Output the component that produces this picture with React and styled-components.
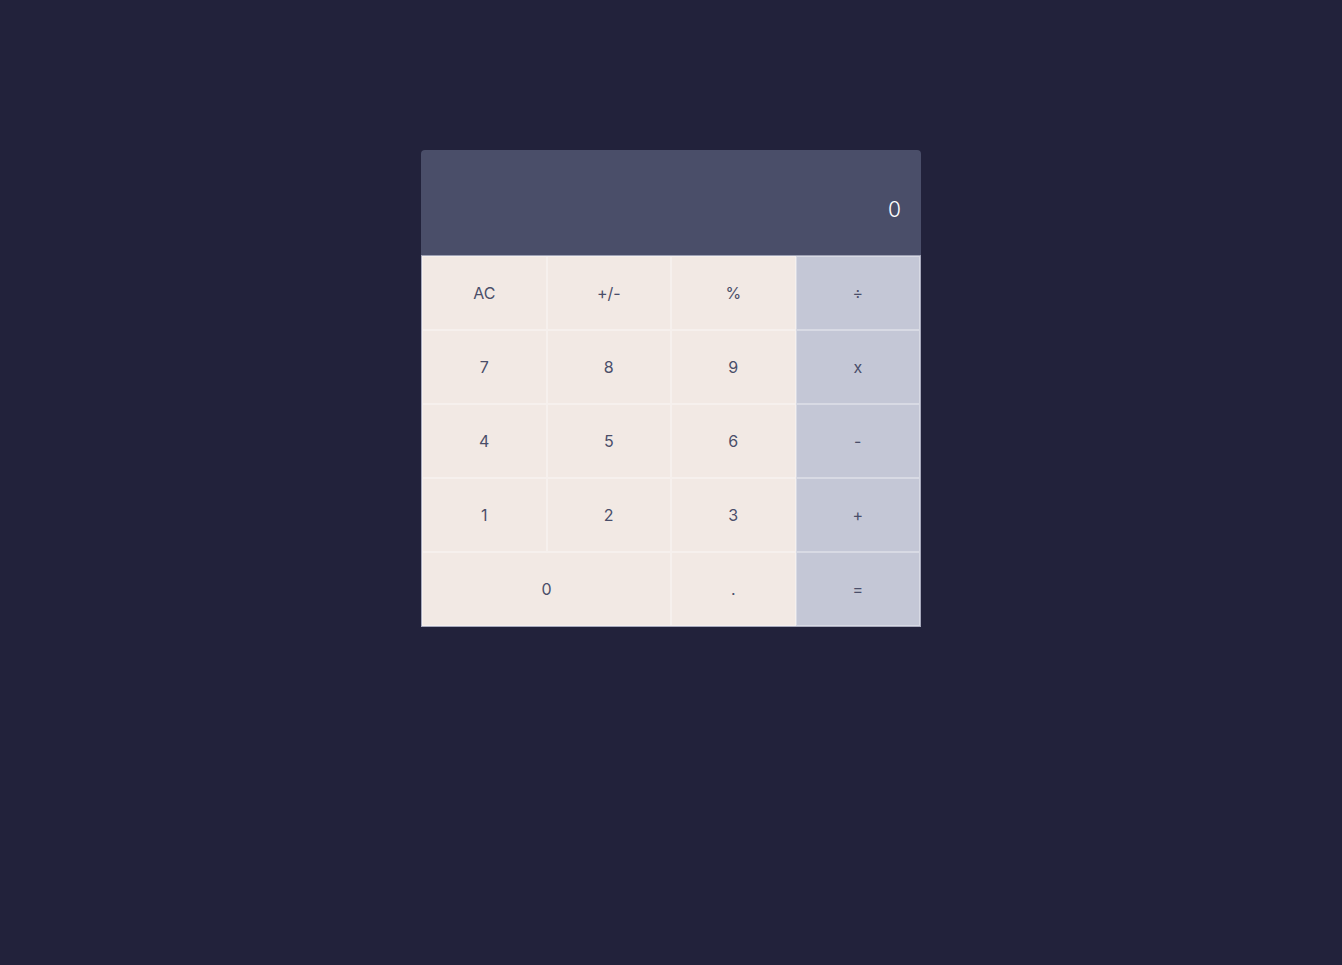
import React, { useState } from "react";
import styled, { createGlobalStyle } from "styled-components";

const Global = createGlobalStyle`
  html, body { margin: 0; padding: 0; background: #22223b; }
  body { font-family: "Inter", "Noto Sans", sans-serif; }
`;

const Page = styled.div`
  min-height: 965px;
  display: flex;
  justify-content: center;
  align-items: flex-start;
  padding-top: 150px;
  box-sizing: border-box;
`;

const Calc = styled.div`
  width: 500px;
  border-radius: 4px 4px 0 0;
  overflow: hidden;
  box-sizing: border-box;
  background: #4a4e69;
`;

const Display = styled.div`
  height: 106px;
  display: flex;
  align-items: center;
  justify-content: flex-end;
  padding: 14px 20px 0;
  color: #ffffff;
  font-size: 21px;
  font-weight: 300;
  border-bottom: 1px solid #9fa2b5;
  box-sizing: border-box;
`;

const Keys = styled.div`
  display: grid;
  grid-template-columns: repeat(4, 1fr);
  grid-auto-rows: 74px;
  border-left: 1px solid #a7a9bc;
  border-bottom: 1px solid #a7a9bc;
  border-right: 1px solid #a7a9bc;
`;

const Key = styled.button`
  grid-column: span ${(p) => p.$span || 1};
  border: 1px solid rgba(255, 255, 255, 0.35);
  margin: 0;
  background: ${(p) => (p.$op ? "#c4c7d6" : "#f2e9e4")};
  color: #4a4e69;
  font-family: inherit;
  font-size: 16px;
  font-weight: 400;
  cursor: pointer;
  padding: 0;
`;

const keys = [
  ["AC"], ["+/-"], ["%"], ["÷", 1, true],
  ["7"], ["8"], ["9"], ["x", 1, true],
  ["4"], ["5"], ["6"], ["-", 1, true],
  ["1"], ["2"], ["3"], ["+", 1, true],
  ["0", 2], ["."], ["=", 1, true],
];

export default function App() {
  const [value] = useState("0");
  return (
    <Page>
      <Global />
      <Calc>
        <Display>{value}</Display>
        <Keys>
          {keys.map(([label, span, op]) => (
            <Key key={label} $span={span} $op={op}>
              {label}
            </Key>
          ))}
        </Keys>
      </Calc>
    </Page>
  );
}
